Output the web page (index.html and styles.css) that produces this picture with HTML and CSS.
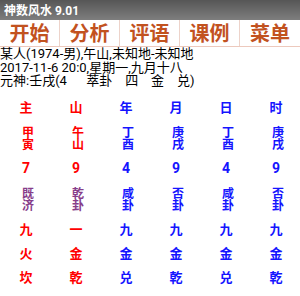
FILE: index.html
```html
<!DOCTYPE html>
<html>
<head>
<meta charset="utf-8">
<link rel="stylesheet" href="styles.css">
</head>
<body>
<div class="app">
  <header class="titlebar">神数风水 9.01</header>
  <nav class="toolbar">
    <span class="tb">开始</span>
    <span class="tb">分析</span>
    <span class="tb">评语</span>
    <span class="tb">课例</span>
    <span class="tb last">菜单</span>
  </nav>
  <div class="info">
    <div class="line">某人(1974-男),午山,未知地-未知地</div>
    <div class="line">2017-11-6 20:0,星期一,九月十八</div>
    <div class="line pre">元神:壬戌(4      萃卦    四    金    兑)</div>
  </div>
  <div class="grid">
    <div class="c r">主</div><div class="c r">山</div><div class="c b">年</div><div class="c b">月</div><div class="c b">日</div><div class="c b">时</div>
    <div class="c r"><span class="st">甲寅</span></div><div class="c r"><span class="st">午山</span></div><div class="c b"><span class="st">丁酉</span></div><div class="c b"><span class="st">庚戌</span></div><div class="c b"><span class="st">丁酉</span></div><div class="c b"><span class="st">庚戌</span></div>
    <div class="c r num">7</div><div class="c r num">9</div><div class="c b num">4</div><div class="c b num">9</div><div class="c b num">4</div><div class="c b num">9</div>
    <div class="c p"><span class="st">既济</span></div><div class="c p"><span class="st">乾卦</span></div><div class="c b"><span class="st">咸卦</span></div><div class="c b"><span class="st">否卦</span></div><div class="c b"><span class="st">咸卦</span></div><div class="c b"><span class="st">否卦</span></div>
    <div class="c r">九</div><div class="c r">一</div><div class="c b">九</div><div class="c b">九</div><div class="c b">九</div><div class="c b">九</div>
    <div class="c r">火</div><div class="c r">金</div><div class="c b">金</div><div class="c b">金</div><div class="c b">金</div><div class="c b">金</div>
    <div class="c r">坎</div><div class="c r">乾</div><div class="c b">兑</div><div class="c b">乾</div><div class="c b">兑</div><div class="c b">乾</div>
  </div>
</div>
</body>
</html>
```
FILE: styles.css
```css
html, body {
  margin: 0;
  padding: 0;
  background: #ffffff;
}
.app {
  width: 300px;
  height: 296px;
  overflow: hidden;
  font-family: Roboto, "Noto Sans CJK SC", sans-serif;
  color: #000;
}
.titlebar {
  height: 20px;
  box-sizing: border-box;
  padding: 4px 0 0 4px;
  background: linear-gradient(#565656, #7e7e7e);
  color: #fff;
  font-size: 12px;
  line-height: 14px;
  font-weight: 700;
}
.toolbar {
  display: flex;
  height: 27px;
  border-bottom: 1px solid #edc9bd;
  box-sizing: border-box;
}
.tb {
  width: 60px;
  box-sizing: border-box;
  border-right: 1px solid #edd3ca;
  text-align: center;
  font-size: 20px;
  line-height: 28px;
  font-weight: 700;
  color: #c2521f;
}
.tb.last {
  border-right: none;
}
.info {
  font-size: 13px;
  line-height: 13.5px;
}
.pre {
  white-space: pre;
}
.grid {
  margin-top: 8px;
  margin-left: 1px;
  display: grid;
  grid-template-columns: repeat(6, 50px);
  grid-template-rows: 24px 37px 24px 37px 24px 24px 24px;
  font-size: 13px;
  font-weight: 700;
}
.c {
  display: flex;
  flex-direction: column;
  align-items: center;
  justify-content: center;
  line-height: 13px;
}
.st {
  writing-mode: vertical-rl;
  text-orientation: upright;
  font-size: 12px;
  line-height: 13px;
}
.r { color: #ff0000; }
.b { color: #1414ff; }
.p { color: #873d8a; }
.num { font-size: 14px; }
```
